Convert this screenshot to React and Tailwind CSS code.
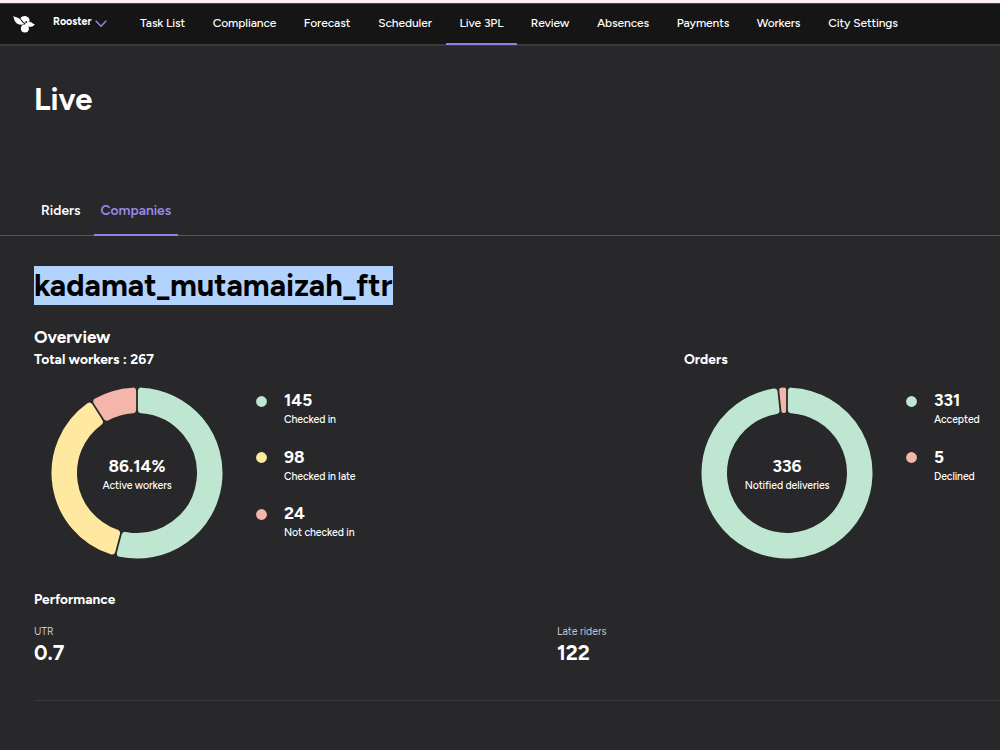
import clsx from "clsx";

const NAV = [
  { label: "Task List", width: "w-[73px]" },
  { label: "Compliance", width: "w-[91px]" },
  { label: "Forecast", width: "w-[74px]" },
  { label: "Scheduler", width: "w-[82px]" },
  { label: "Live 3PL", width: "w-[71px]" },
  { label: "Review", width: "w-[66px]" },
  { label: "Absences", width: "w-[80px]" },
  { label: "Payments", width: "w-[80px]" },
  { label: "Workers", width: "w-[71px]" },
  { label: "City Settings", width: "w-[98px]" },
];

const MINT = "#bee6d1";
const YELLOW = "#ffe9a1";
const PINK = "#f4b6ab";

const WORKERS = [
  { value: 145, label: "Checked in", color: MINT, from: 0, to: 194.8 },
  { value: 98, label: "Checked in late", color: YELLOW, from: 194.8, to: 327.6 },
  { value: 24, label: "Not checked in", color: PINK, from: 327.6, to: 360 },
];

const ORDERS = [
  { value: 331, label: "Accepted", color: MINT, from: 0, to: 354 },
  { value: 5, label: "Declined", color: PINK, from: 354, to: 360 },
];

const OUTER = 85.5;
const INNER = 60;

// The slice is drawn smaller by `corner` and a round stroke fills it back out
function slicePath(from, to, corner) {
  const inset = corner + 0.9;
  const point = (radius, deg, side) => {
    const a = (deg * Math.PI) / 180 + side * Math.asin(inset / radius);
    return `${(radius * Math.sin(a)).toFixed(2)} ${(-radius * Math.cos(a)).toFixed(2)}`;
  };
  const R = OUTER - corner;
  const r = INNER + corner;
  const large = to - from > 185 ? 1 : 0;
  return `M${point(R, from, 1)} A${R} ${R} 0 ${large} 1 ${point(R, to, -1)} L${point(r, to, -1)} A${r} ${r} 0 ${large} 0 ${point(r, from, 1)} Z`;
}

function Donut({ slices, value, label }) {
  return (
    <div className="grid h-[172px] w-[172px] place-items-center">
      <svg viewBox="-86 -86 172 172" className="col-start-1 row-start-1 h-[172px] w-[172px]">
        {slices.map((s) => {
          const corner = s.to - s.from < 10 ? 2 : 3.5;
          return (
            <path
              key={s.label}
              d={slicePath(s.from, s.to, corner)}
              fill={s.color}
              stroke={s.color}
              strokeWidth={corner * 2}
              strokeLinejoin="round"
            />
          );
        })}
      </svg>
      <div className="col-start-1 row-start-1 pt-[5px] text-center">
        <div className="text-[17.2px] leading-[19px] font-bold">{value}</div>
        <div className="pt-px text-[10.5px] leading-[18px] font-medium tracking-[-0.1px]">{label}</div>
      </div>
    </div>
  );
}

function Legend({ items }) {
  return (
    <ul className="flex flex-col gap-[18.5px] pt-1">
      {items.map((item) => (
        <li key={item.label} className="flex gap-[17px]">
          <svg viewBox="0 0 11 11" className="mt-[4.5px] size-[11px]">
            <circle cx="5.5" cy="5.5" r="5.4" fill={item.color} />
          </svg>
          <div className="whitespace-nowrap">
            <div className="text-[17.2px] leading-[18px] font-bold">{item.value}</div>
            <div className="pt-[2px] text-[10.5px] leading-[18px] font-medium tracking-[-0.1px]">{item.label}</div>
          </div>
        </li>
      ))}
    </ul>
  );
}

function Logo() {
  return (
    <svg viewBox="0 0 22 18" className="h-[18px] w-[22px]" fill="#fff">
      {/* tail */}
      <path d="M.3 1C2.2 2.5 4.2 1.6 6.5 3.8 8.2 5.4 9 7.6 11.4 9 8.5 10.8 3 9.5 1.6 5.6 1 4 .6 2.5.3 1Z" />
      {/* head and beak */}
      <path d="M7.4 3.3C8.5 1.5 11 .8 13 1.2c2.6.6 3.8 2.6 3.5 5l-3.7 1.9C10.5 7.8 9.4 5.6 7.4 3.3Z" />
      <path d="M11.6 9.3C13 7.2 15.4 6.3 17.4 6.9c1.5.4 2.6 1.8 4.4 2.5-1.4 1.9-3.8 2.8-6.3 2.2Z" />
      <circle cx="11.9" cy="13.4" r="4" />
      <circle cx="13.2" cy="7" r=".9" fill="#151515" />
    </svg>
  );
}

function Header() {
  return (
    <header className="flex h-[43px] border-t border-b-2 border-t-[#4b484a] border-b-[#39393a] bg-[#151515]">
      <div className="flex w-[126px] shrink-0 pt-[11px] pl-[13px]">
        <Logo />
        <span className="-mt-px ml-[18px] text-[10.7px] leading-[15px] font-bold">Rooster</span>
        <svg viewBox="0 0 12 8" className="mt-[5px] ml-1 h-2 w-3" fill="none" stroke="#8f7fdc" strokeWidth="1.6">
          <path d="M1.2 1.2 6 6.3l4.8-5.1" strokeLinecap="round" strokeLinejoin="round" />
        </svg>
      </div>
      <nav className="flex">
        {NAV.map(({ label, width }) => (
          <a
            key={label}
            href="#"
            className={clsx(
              "-mb-px flex justify-center border-b-2 pt-[10px] text-[12px] leading-[18px] font-medium tracking-[-0.1px] whitespace-nowrap",
              width,
              label === "Live 3PL" ? "border-[#9180e0]" : "border-transparent"
            )}
          >
            {label}
          </a>
        ))}
      </nav>
    </header>
  );
}

export default function App() {
  return (
    <div className="h-[750px] w-[1000px] overflow-hidden bg-[#28282a] pt-[3px] font-['Figtree','Inter',sans-serif] text-white [box-shadow:inset_0_3px_#fbeff3]">
      <Header />

      <h1 className="mt-[34px] ml-[34px] text-[30.8px] leading-10 font-bold">Live</h1>

      {/* Tabs */}
      <div className="mt-[72px] flex h-[44px] border-b border-[#57575a] pl-[34px] text-[13.8px] leading-[18px] font-semibold">
        <a href="#" className="w-[60px] pt-[9px] pl-[7px]">Riders</a>
        <a href="#" className="-mb-px w-[84px] border-b-2 border-[#9180e0] pt-[9px] pl-[6.5px] text-[#9b8aee]">Companies</a>
      </div>

      <main className="pl-[34px]">
        <h2 className="mt-[30px] h-[39px] w-[359px] bg-[#b1d3fd] text-[30.8px] leading-[39px] font-bold whitespace-nowrap text-black">
          kadamat_mutamaizah_ftr
        </h2>

        <h3 className="mt-[20px] text-[17.2px] leading-6 font-bold">Overview</h3>
        <div className="grid grid-cols-[650px_316px]">
          <section>
            <h4 className="text-[13.8px] leading-5 font-bold">Total workers : 267</h4>
            <div className="mt-[18px] flex pl-[17px]">
              <Donut slices={WORKERS} value="86.14%" label="Active workers" />
              <div className="ml-[33px]">
                <Legend items={WORKERS} />
              </div>
            </div>
          </section>
          <section>
            <h4 className="text-[13.8px] leading-5 font-bold">Orders</h4>
            <div className="mt-[18px] flex pl-[17px]">
              <Donut slices={ORDERS} value="336" label="Notified deliveries" />
              <div className="ml-[33px]">
                <Legend items={ORDERS} />
              </div>
            </div>
          </section>
        </div>

        <section className="mt-[30px] h-[112px] border-b border-[#39393b]">
          <h4 className="text-[13.7px] leading-5 font-bold">Performance</h4>
          <div className="mt-[14px] flex">
            <div className="w-[523px]">
              <div className="text-[10.5px] leading-[18px] text-[#c4c4c6]">UTR</div>
              <div className="text-[20.8px] leading-[23px] font-bold">0.7</div>
            </div>
            <div>
              <div className="text-[10.5px] leading-[18px] text-[#c4c4c6]">Late riders</div>
              <div className="text-[20.8px] leading-[23px] font-bold">122</div>
            </div>
          </div>
        </section>
      </main>
    </div>
  );
}
